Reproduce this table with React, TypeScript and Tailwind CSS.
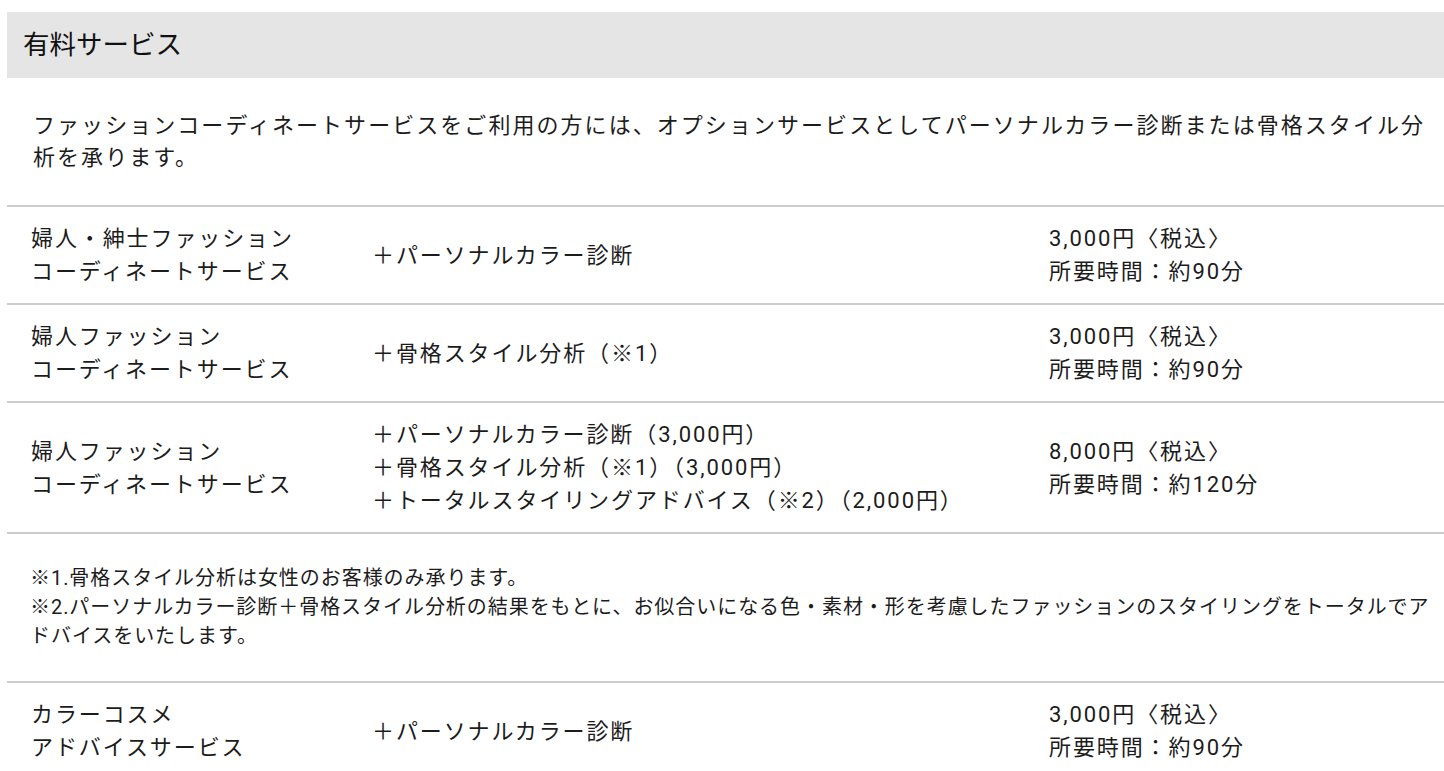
const rows = [
  {
    name: ["婦人・紳士ファッション", "コーディネートサービス"],
    options: ["＋パーソナルカラー診断"],
    price: "3,000円〈税込〉",
    time: "所要時間：約90分",
  },
  {
    name: ["婦人ファッション", "コーディネートサービス"],
    options: ["＋骨格スタイル分析（※1）"],
    price: "3,000円〈税込〉",
    time: "所要時間：約90分",
  },
  {
    name: ["婦人ファッション", "コーディネートサービス"],
    options: [
      "＋パーソナルカラー診断（3,000円）",
      "＋骨格スタイル分析（※1）（3,000円）",
      "＋トータルスタイリングアドバイス（※2）（2,000円）",
    ],
    price: "8,000円〈税込〉",
    time: "所要時間：約120分",
  },
];

const lastRow = {
  name: ["カラーコスメ", "アドバイスサービス"],
  options: ["＋パーソナルカラー診断"],
  price: "3,000円〈税込〉",
  time: "所要時間：約90分",
};

const Row = ({ row }: any) => (
  <div className="grid grid-cols-[341px_677px_1fr] items-center border-t-2 border-[#cccccc] pl-6 py-[15px] text-[22px] leading-[33px] tracking-[1.9px]">
    <div>
      {row.name.map((n: string, i: number) => (
        <p key={i}>{n}</p>
      ))}
    </div>
    <div>
      {row.options.map((o: string, i: number) => (
        <p key={i}>{o}</p>
      ))}
    </div>
    <div>
      <p>{row.price}</p>
      <p>{row.time}</p>
    </div>
  </div>
);

export default function App() {
  return (
    <div
      className="bg-white text-[#1c1c1c] pl-[7px] pt-3 min-h-screen"
      style={{ fontFamily: '"Roboto", "Noto Sans CJK JP", sans-serif' }}
    >
      {/* HEADER */}
      <div className="bg-[#e5e5e5] h-[66px] flex items-center pl-4">
        <h2 className="text-[26.5px] text-[#111111]">有料サービス</h2>
      </div>

      {/* INTRO */}
      <p className="pl-[26px] pr-4 pt-[32px] pb-[31px] text-[22px] leading-[32px] tracking-[2.05px]">
        ファッションコーディネートサービスをご利用の方には、オプションサービスとしてパーソナルカラー診断または骨格スタイル分析を承ります。
      </p>

      {/* TABLE */}
      <div>
        {rows.map((r, i) => (
          <Row key={i} row={r} />
        ))}
      </div>

      {/* NOTES */}
      <div className="border-t-2 border-[#cccccc] pl-[23px] pr-2 py-[30px] text-[20px] leading-[29px] tracking-[0.95px]">
        <p>※1.骨格スタイル分析は女性のお客様のみ承ります。</p>
        <p>
          ※2.パーソナルカラー診断＋骨格スタイル分析の結果をもとに、お似合いになる色・素材・形を考慮したファッションのスタイリングをトータルでアドバイスをいたします。
        </p>
      </div>

      <Row row={lastRow} />
    </div>
  );
}
